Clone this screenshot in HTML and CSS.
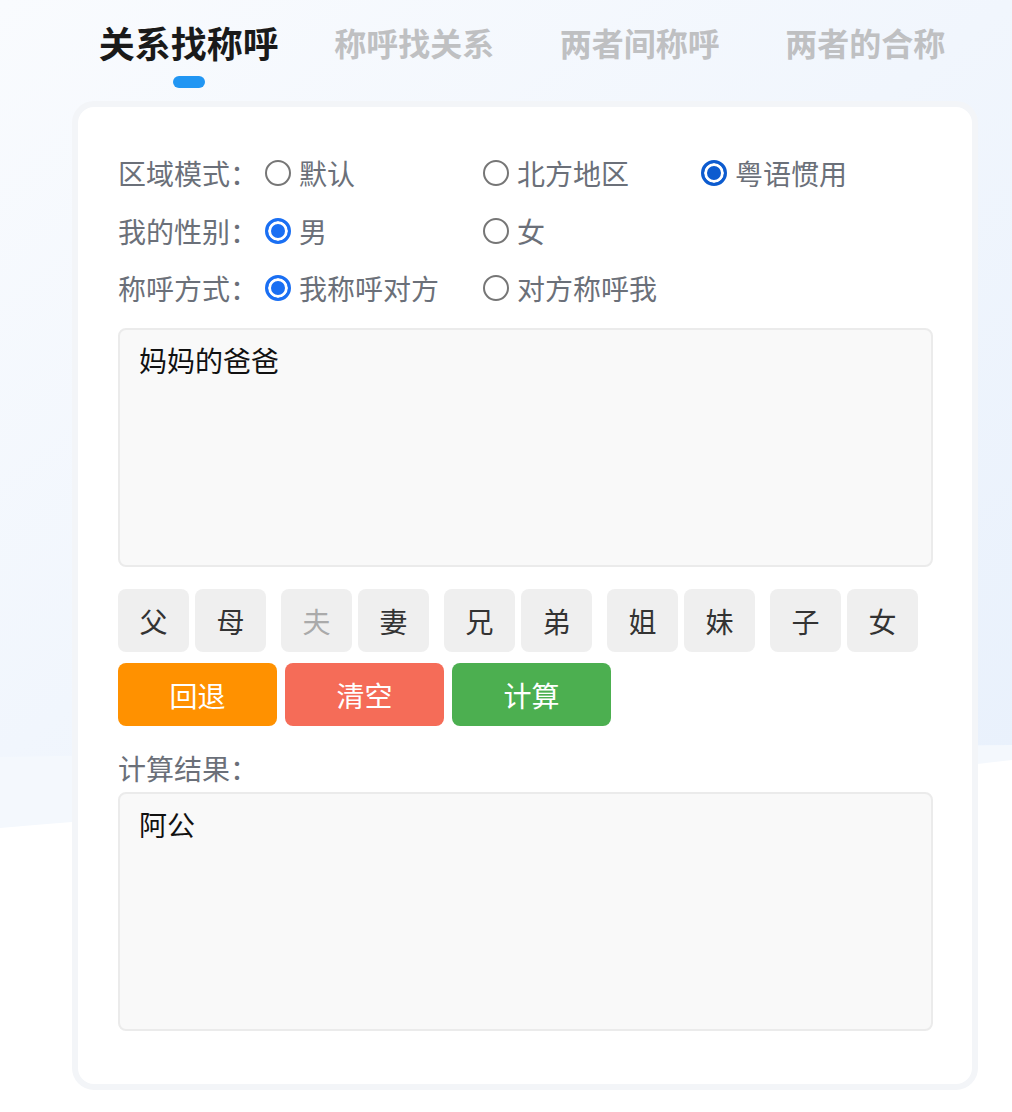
FILE: index.html
```html
<!DOCTYPE html>
<html>
<head>
  <meta charset="utf-8">
  <title>亲戚称呼计算器</title>
  <link rel="stylesheet" href="styles.css">
</head>
<body>
  <div class="backdrop">
    <svg width="1012" height="1112" viewBox="0 0 1012 1112" preserveAspectRatio="none">
      <defs>
        <linearGradient id="sky" x1="0" y1="0" x2="1" y2="1">
          <stop offset="0" stop-color="#f9fbfe"/>
          <stop offset="0.5" stop-color="#f1f6fd"/>
          <stop offset="1" stop-color="#e9f1fc"/>
        </linearGradient>
      </defs>
      <path d="M0 0 H1012 V760 C760 790 300 800 0 828 Z" fill="#f4f8fd"/>
      <path d="M0 0 H1012 V745 C700 748 300 752 0 757 Z" fill="url(#sky)"/>
    </svg>
  </div>

  <div class="page">
    <div class="tabs">
      <div class="tab active">关系找称呼<span class="bar"></span></div>
      <div class="tab">称呼找关系</div>
      <div class="tab">两者间称呼</div>
      <div class="tab">两者的合称</div>
    </div>

    <div class="card">
      <div class="field">
        <span class="label">区域模式：</span>
        <div class="options">
          <label class="radio"><input type="radio" name="mode"><span>默认</span></label>
          <label class="radio"><input type="radio" name="mode"><span>北方地区</span></label>
          <label class="radio"><input type="radio" name="mode" class="dark" checked><span>粤语惯用</span></label>
        </div>
      </div>
      <div class="field">
        <span class="label">我的性别：</span>
        <div class="options">
          <label class="radio"><input type="radio" name="sex" checked><span>男</span></label>
          <label class="radio"><input type="radio" name="sex"><span>女</span></label>
        </div>
      </div>
      <div class="field">
        <span class="label">称呼方式：</span>
        <div class="options">
          <label class="radio"><input type="radio" name="way" checked><span>我称呼对方</span></label>
          <label class="radio"><input type="radio" name="way"><span>对方称呼我</span></label>
        </div>
      </div>

      <textarea class="box query">妈妈的爸爸</textarea>

      <div class="keys">
        <div class="pair"><button>父</button><button>母</button></div>
        <div class="pair"><button disabled>夫</button><button>妻</button></div>
        <div class="pair"><button>兄</button><button>弟</button></div>
        <div class="pair"><button>姐</button><button>妹</button></div>
        <div class="pair"><button>子</button><button>女</button></div>
      </div>

      <div class="actions">
        <button class="btn back">回退</button>
        <button class="btn clear">清空</button>
        <button class="btn calc">计算</button>
      </div>

      <div class="result-label">计算结果：</div>
      <textarea class="box" readonly>阿公</textarea>
    </div>
  </div>
</body>
</html>
```

FILE: styles.css
```css
body {
  margin: 0;
  font-family: "Noto Sans CJK SC", "Noto Sans", sans-serif;
  background: #fff;
}

.backdrop {
  position: absolute;
  top: 0;
  left: 0;
  width: 1012px;
  height: 1112px;
  z-index: -1;
}

.page {
  width: 906px;
  margin-left: 72px;
}

.tabs {
  display: grid;
  grid-template-columns: repeat(4, 1fr);
  padding: 19px 0 0 4px;
  height: 69px;
}

.tab {
  display: flex;
  flex-direction: column;
  align-items: center;
  font-size: 32px;
  font-weight: 700;
  line-height: 46px;
  color: #bfc0c2;
}

.tab.active {
  font-size: 36px;
  color: #1a1a1a;
}

.tab .bar {
  width: 32px;
  height: 12px;
  margin-top: 11px;
  border-radius: 6px;
  background: #2196f3;
}

.card {
  margin-top: 13px;
  background: #fff;
  border: 6px solid #f3f5f8;
  border-radius: 22px;
  padding: 46px 40px 53px 40px;
}

.field {
  display: flex;
  align-items: center;
  height: 40px;
  margin-bottom: 17.5px;
  font-size: 28px;
  color: #6b7079;
}

.field .label {
  width: 147px;
  flex-shrink: 0;
}

.options {
  display: grid;
  grid-template-columns: repeat(3, 218px);
}

.radio {
  display: flex;
  align-items: center;
  gap: 8px;
  line-height: 40px;
}

.radio input {
  appearance: none;
  margin: 0;
  width: 26px;
  height: 26px;
  border: 2px solid #767676;
  border-radius: 50%;
  background: #fff;
}

.radio input:checked {
  border: 3px solid #1a6ff3;
  background: #1a6ff3;
  box-shadow: inset 0 0 0 3px #fff;
}

.radio input.dark:checked {
  border-color: #0c5bcf;
  background: #0c5bcf;
}

.box {
  display: block;
  box-sizing: border-box;
  width: 815px;
  height: 239px;
  margin: 4px 0 0 0;
  padding: 12px 19px;
  border: 2px solid #ebebeb;
  border-radius: 8px;
  background: #f9f9f9;
  font-family: inherit;
  font-size: 28px;
  line-height: 36px;
  color: #111;
  resize: none;
  outline: none;
}

.box.query {
  margin-top: 20px;
}

.keys {
  display: flex;
  gap: 15px;
  margin-top: 22px;
}

.pair {
  display: flex;
  gap: 6px;
}

.keys button {
  width: 71px;
  height: 63px;
  border: none;
  border-radius: 8px;
  background: #efefef;
  font-family: inherit;
  font-size: 28px;
  color: #333;
  padding: 0;
}

.keys button:disabled {
  color: #aaa;
}

.actions {
  display: flex;
  gap: 8px;
  margin-top: 11px;
}

.btn {
  width: 159px;
  height: 63px;
  border: none;
  border-radius: 8px;
  font-family: inherit;
  font-size: 28px;
  color: #fff;
  padding: 0;
}

.btn.back { background: #ff9100; }
.btn.clear { background: #f56c58; }
.btn.calc { background: #4caf50; }

.result-label {
  margin-top: 22px;
  height: 40px;
  line-height: 40px;
  font-size: 28px;
  color: #6b7079;
}
```
